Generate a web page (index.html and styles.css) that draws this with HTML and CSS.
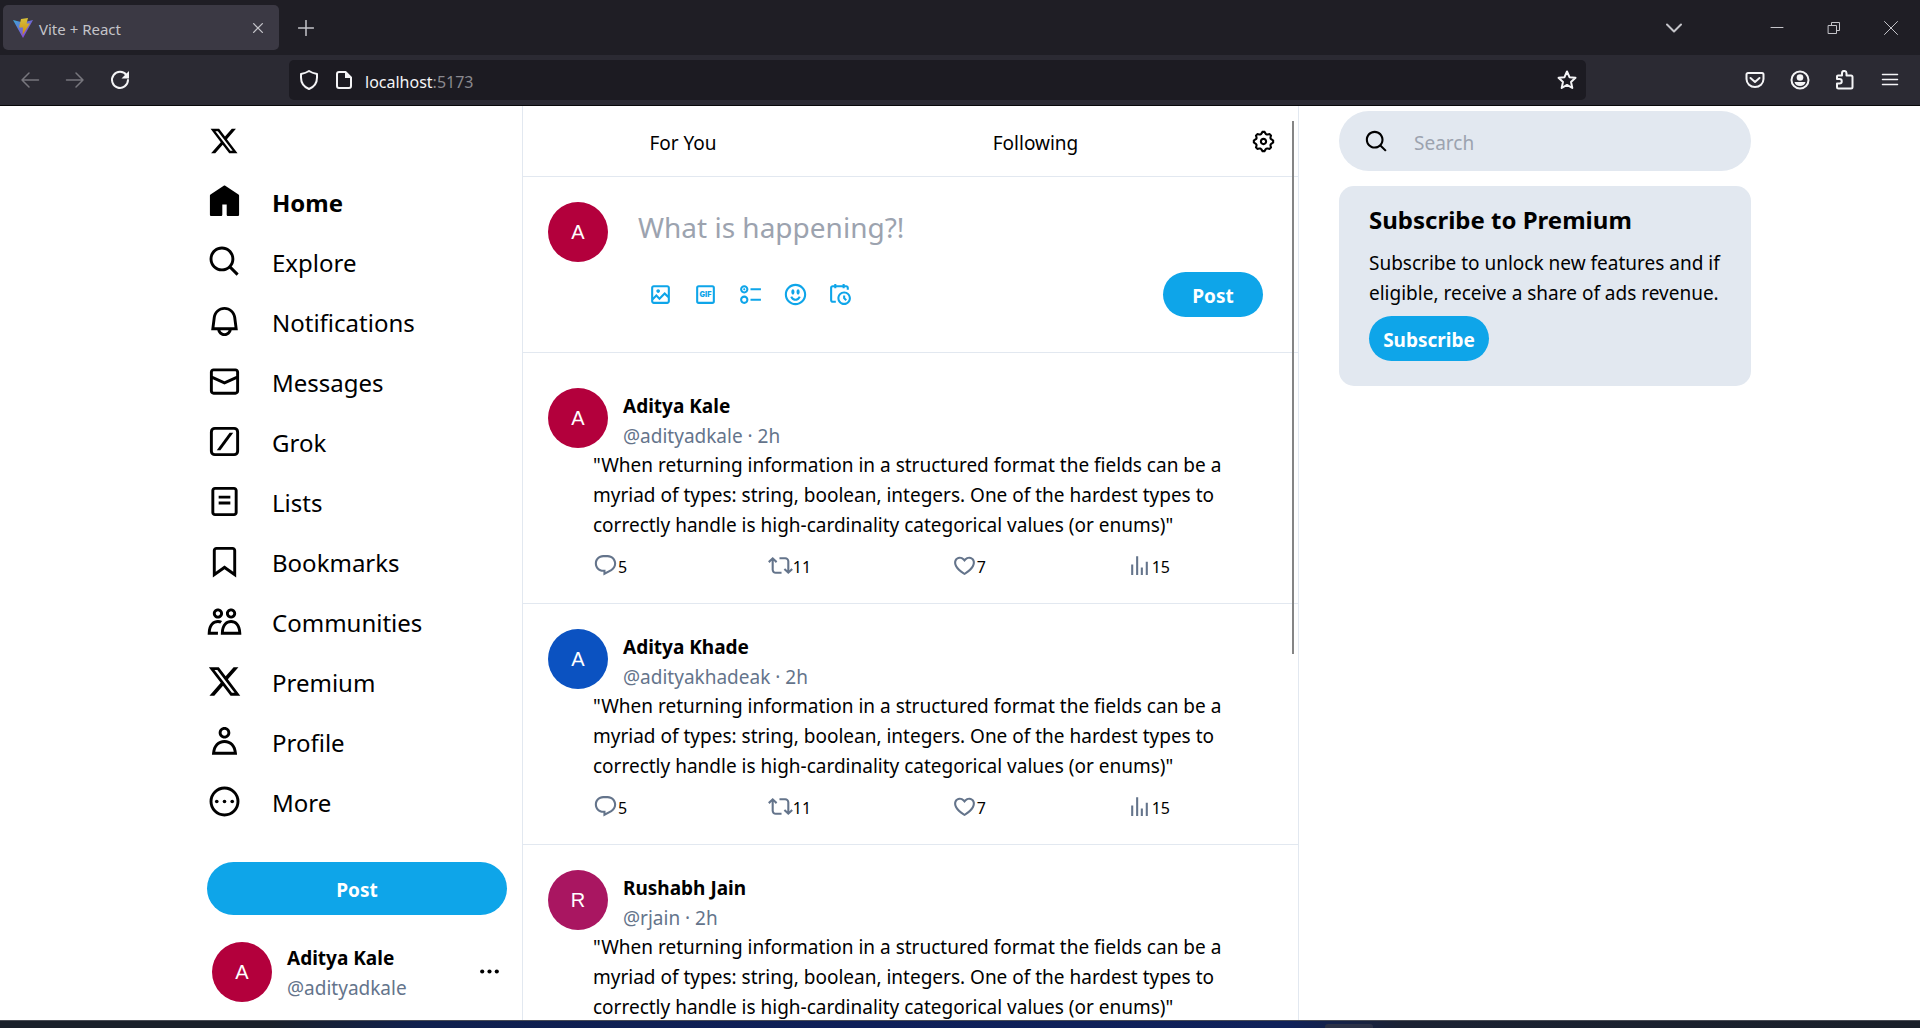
FILE: index.html
```html
<!DOCTYPE html>
<html lang="en">
<head>
<meta charset="utf-8">
<title>Vite + React</title>
<link rel="stylesheet" href="styles.css">
</head>
<body>
<svg class="sprite" aria-hidden="true">
  <defs>
    <linearGradient id="vite-blue" x1="0" y1="0" x2="1" y2="1"><stop offset="0" stop-color="#3aa9d8"/><stop offset="1" stop-color="#a32bd0"/></linearGradient>
    <linearGradient id="vite-gold" x1="0" y1="0" x2="0" y2="1"><stop offset="0" stop-color="#d8c23a"/><stop offset="1" stop-color="#c98a14"/></linearGradient>
  </defs>
  <symbol id="i-x" viewBox="0 0 24 24"><path d="M18.244 2.25h3.308l-7.227 8.26 8.502 11.24H16.17l-5.214-6.817L4.99 21.75H1.68l7.73-8.835L1.254 2.25H8.08l4.713 6.231zm-1.161 17.52h1.833L7.084 4.126H5.117z"/></symbol>
  <symbol id="i-home" viewBox="0 0 24 24"><path d="M21.591 7.146L12.52 1.157c-.316-.21-.724-.21-1.04 0l-9.071 5.99c-.26.173-.409.456-.409.757v13.183c0 .502.418.913.929.913h6.638c.511 0 .929-.41.929-.913v-7.075h3.008v7.075c0 .502.418.913.929.913h6.639c.51 0 .928-.41.928-.913V7.904c0-.301-.158-.584-.408-.758z"/></symbol>
  <symbol id="i-search" viewBox="0 0 24 24"><path d="M10.25 3.75c-3.59 0-6.5 2.91-6.5 6.5s2.91 6.5 6.5 6.5c1.795 0 3.419-.726 4.596-1.904 1.178-1.177 1.904-2.801 1.904-4.596 0-3.59-2.91-6.5-6.5-6.5zm-8.5 6.5c0-4.694 3.806-8.5 8.5-8.5s8.5 3.806 8.5 8.5c0 1.986-.682 3.815-1.824 5.262l4.781 4.781-1.414 1.414-4.781-4.781c-1.447 1.142-3.276 1.824-5.262 1.824-4.694 0-8.5-3.806-8.5-8.5z"/></symbol>
  <symbol id="i-bell" viewBox="0 0 24 24"><path d="M19.993 9.042C19.48 5.017 16.054 2 11.996 2s-7.49 3.021-7.999 7.051L2.866 18H7.1c.463 2.282 2.481 4 4.9 4s4.437-1.718 4.9-4h4.236l-1.143-8.958zM12 20c-1.306 0-2.417-.835-2.829-2h5.658c-.412 1.165-1.523 2-2.829 2zm-6.866-4l.847-6.698C6.364 6.272 8.941 4 11.996 4s5.627 2.268 6.013 5.295L18.864 16H5.134z"/></symbol>
  <symbol id="i-mail" viewBox="0 0 24 24"><path d="M1.998 5.5c0-1.381 1.119-2.5 2.5-2.5h15c1.381 0 2.5 1.119 2.5 2.5v13c0 1.381-1.119 2.5-2.5 2.5h-15c-1.381 0-2.5-1.119-2.5-2.5v-13zm2.5-.5c-.276 0-.5.224-.5.5v2.764l8 3.638 8-3.636V5.5c0-.276-.224-.5-.5-.5h-15zm15.5 5.463l-8 3.636-8-3.638V18.5c0 .276.224.5.5.5h15c.276 0 .5-.224.5-.5v-8.037z"/></symbol>
  <symbol id="i-grok" viewBox="0 0 24 24"><rect x="3" y="3" width="18" height="18" rx="2.4" fill="none" stroke="currentColor" stroke-width="2"/><path d="M15.5 6h2.5L9.200 18H6.700z"/></symbol>
  <symbol id="i-list" viewBox="0 0 24 24"><path d="M3 4.5C3 3.12 4.12 2 5.5 2h13C19.88 2 21 3.12 21 4.5v15c0 1.38-1.12 2.5-2.5 2.5h-13C4.12 22 3 20.88 3 19.5v-15zM5.5 4c-.28 0-.5.22-.5.5v15c0 .28.22.5.5.5h13c.28 0 .5-.22.5-.5v-15c0-.28-.22-.5-.5-.5h-13zM16 10H8V8h8v2zm-8 2h8v2H8v-2z"/></symbol>
  <symbol id="i-bookmark" viewBox="0 0 24 24"><path d="M4 4.5C4 3.12 5.119 2 6.5 2h11C18.881 2 20 3.12 20 4.5v18.44l-8-5.71-8 5.71V4.5zM6.5 4c-.276 0-.5.22-.5.5v14.56l6-4.29 6 4.29V4.5c0-.28-.224-.5-.5-.5h-11z"/></symbol>
  <symbol id="i-people" viewBox="0 0 24 24"><path d="M7.501 19.917L7.471 21H.472l.029-1.027c.184-6.618 3.736-8.977 7-8.977.963 0 1.95.212 2.87.672-.444.478-.851 1.03-1.212 1.656-.507-.204-1.054-.329-1.658-.329-2.767 0-4.57 2.223-4.938 6.004H7.56c-.023.302-.05.599-.059.918zm15.998.056L23.528 21H9.472l.029-1.027c.184-6.618 3.736-8.977 7-8.977s6.816 2.358 7 8.977zM21.437 19c-.367-3.781-2.17-6.004-4.938-6.004s-4.57 2.223-4.938 6.004h9.875zm-4.938-9c-.799 0-1.527-.279-2.116-.73-.836-.64-1.384-1.638-1.384-2.77 0-1.93 1.567-3.5 3.5-3.5s3.5 1.57 3.5 3.5c0 1.132-.548 2.13-1.384 2.77-.589.451-1.317.73-2.116.73zm-1.5-3.5c0 .827.673 1.5 1.5 1.5s1.5-.673 1.5-1.5-.673-1.5-1.5-1.5-1.5.673-1.5 1.5zM7.501 3C9.434 3 11 4.57 11 6.5S9.434 10 7.501 10 4 8.43 4 6.5 5.57 3 7.501 3zm0 2C6.673 5 6 5.673 6 6.5S6.673 8 7.501 8 9 7.327 9 6.5 8.328 5 7.501 5z"/></symbol>
  <symbol id="i-person" viewBox="0 0 24 24"><path d="M5.651 19h12.698c-.337-1.8-1.023-3.21-1.945-4.19C15.318 13.65 13.838 13 12 13s-3.317.65-4.404 1.81c-.922.98-1.608 2.39-1.945 4.19zm.486-5.56C7.627 11.85 9.648 11 12 11s4.373.85 5.863 2.44c1.477 1.58 2.366 3.8 2.632 6.46l.11 1.1H3.395l.11-1.1c.266-2.66 1.155-4.88 2.632-6.46zM12 4c-1.105 0-2 .9-2 2s.895 2 2 2 2-.9 2-2-.895-2-2-2zM8 6c0-2.21 1.791-4 4-4s4 1.79 4 4-1.791 4-4 4-4-1.79-4-4z"/></symbol>
  <symbol id="i-more" viewBox="0 0 24 24"><circle cx="12" cy="12" r="9.25" fill="none" stroke="currentColor" stroke-width="2"/><circle cx="6.700" cy="12" r="1.25"/><circle cx="12" cy="12" r="1.25"/><circle cx="17.300" cy="12" r="1.25"/></symbol>
  <symbol id="i-dots" viewBox="0 0 24 24"><circle cx="5" cy="12" r="2"/><circle cx="12" cy="12" r="2"/><circle cx="19" cy="12" r="2"/></symbol>
  <symbol id="i-gear" viewBox="0 0 24 24"><path d="M10.54 1.75h2.92l1.57 2.36c.11.17.32.25.53.21l2.53-.59 2.17 2.17-.58 2.54c-.05.2.04.41.21.53l2.36 1.57v2.92l-2.36 1.57c-.17.12-.26.33-.21.53l.58 2.54-2.17 2.17-2.53-.59c-.21-.04-.42.04-.53.21l-1.57 2.36h-2.92l-1.58-2.36c-.11-.17-.32-.25-.52-.21l-2.54.59-2.17-2.17.58-2.54c.05-.2-.03-.41-.21-.53l-2.35-1.57v-2.92L4.1 8.97c.18-.12.26-.33.21-.53L3.73 5.9 5.9 3.73l2.54.59c.2.04.41-.04.52-.21l1.58-2.36zm1.07 2l-.98 1.47C10.05 6.08 9 6.5 7.99 6.27l-1.46-.34-.6.6.33 1.46c.24 1.01-.18 2.07-1.05 2.64l-1.46.98v.78l1.46.98c.87.57 1.29 1.63 1.05 2.64l-.33 1.46.6.6 1.46-.34c1.01-.23 2.06.19 2.64 1.05l.98 1.47h.78l.97-1.47c.58-.86 1.63-1.28 2.65-1.05l1.45.34.61-.6-.34-1.46c-.23-1.01.18-2.07 1.05-2.64l1.47-.98v-.78l-1.47-.98c-.87-.57-1.28-1.63-1.05-2.64l.34-1.46-.61-.6-1.45.34c-1.02.23-2.07-.19-2.65-1.05l-.97-1.47h-.78zM12 10.5c-.83 0-1.5.67-1.5 1.5s.67 1.5 1.5 1.5c.82 0 1.5-.67 1.5-1.5s-.68-1.5-1.5-1.5zM8.5 12c0-1.93 1.56-3.5 3.5-3.5 1.93 0 3.5 1.57 3.5 3.5s-1.57 3.5-3.5 3.5c-1.94 0-3.5-1.57-3.5-3.5z"/></symbol>
  <symbol id="i-image" viewBox="0 0 24 24"><path d="M3 5.5C3 4.119 4.119 3 5.5 3h13C19.881 3 21 4.119 21 5.5v13c0 1.381-1.119 2.5-2.5 2.5h-13C4.119 21 3 19.881 3 18.5v-13zM5.5 5c-.276 0-.5.224-.5.5v9.086l3-3 3 3 5-5 3 3V5.5c0-.276-.224-.5-.5-.5h-13zM19 15.414l-3-3-5 5-3-3-3 3V18.5c0 .276.224.5.5.5h13c.276 0 .5-.224.5-.5v-3.086zM9.75 7C8.784 7 8 7.784 8 8.75s.784 1.75 1.75 1.75 1.75-.784 1.75-1.75S10.716 7 9.75 7z"/></symbol>
  <symbol id="i-poll" viewBox="0 0 24 24"><path d="M6 5c-1.1 0-2 .895-2 2s.9 2 2 2 2-.895 2-2-.9-2-2-2zM2 7c0-2.209 1.79-4 4-4s4 1.791 4 4-1.79 4-4 4-4-1.791-4-4zm20 1H12V6h10v2zM6 15c-1.1 0-2 .895-2 2s.9 2 2 2 2-.895 2-2-.9-2-2-2zm-4 2c0-2.209 1.79-4 4-4s4 1.791 4 4-1.79 4-4 4-4-1.791-4-4zm20 1H12v-2h10v2zM7 7c0 .552-.45 1-1 1s-1-.448-1-1 .45-1 1-1 1 .448 1 1z"/></symbol>
  <symbol id="i-smile" viewBox="0 0 24 24"><path d="M8 9.5C8 8.119 8.672 7 9.5 7S11 8.119 11 9.5 10.328 12 9.5 12 8 10.881 8 9.5zm6.5 2.5c.828 0 1.5-1.119 1.5-2.5S15.328 7 14.5 7 13 8.119 13 9.5s.672 2.5 1.5 2.5zM12 16c-2.224 0-3.021-2.227-3.051-2.316l-1.897.633c.05.15 1.271 3.684 4.949 3.684s4.898-3.533 4.949-3.684l-1.896-.638c-.033.095-.83 2.322-3.053 2.322zm10.25-4.001c0 5.652-4.598 10.25-10.25 10.25S1.75 17.652 1.75 12 6.348 1.75 12 1.75 22.25 6.348 22.25 12zm-2 0c0-4.549-3.701-8.25-8.25-8.25S3.75 7.451 3.75 12s3.701 8.25 8.25 8.25 8.25-3.701 8.25-8.25z"/></symbol>
  <symbol id="i-schedule" viewBox="0 0 24 24"><path d="M6 3V2h2v1h6V2h2v1h1.5C18.88 3 20 4.119 20 5.5v2h-2v-2c0-.276-.22-.5-.5-.5H16v1h-2V5H8v1H6V5H4.5c-.28 0-.5.224-.5.5v12c0 .276.22.5.5.5h3v2h-3C3.12 20 2 18.881 2 17.5v-12C2 4.119 3.12 3 4.500 3H6zm9.5 8c-2.49 0-4.5 2.015-4.5 4.5s2.01 4.5 4.5 4.5 4.5-2.015 4.5-4.5-2.01-4.5-4.5-4.5zM9 15.5C9 11.91 11.91 9 15.5 9s6.5 2.91 6.5 6.5-2.91 6.5-6.5 6.5S9 19.09 9 15.5zm5.5-2.5h2v2.086l1.71 1.707-1.42 1.414-2.29-2.293V13z"/></symbol>
  <symbol id="i-reply" viewBox="0 0 24 24"><path d="M1.751 10c0-4.42 3.584-8 8.005-8h4.366c4.49 0 8.129 3.64 8.129 8.13 0 2.96-1.607 5.68-4.196 7.11l-8.054 4.46v-3.69h-.067c-4.49.1-8.183-3.51-8.183-8.01zm8.005-6c-3.317 0-6.005 2.69-6.005 6 0 3.37 2.77 6.08 6.138 6.01l.351-.01h1.761v2.3l5.087-2.81c1.951-1.08 3.163-3.13 3.163-5.36 0-3.39-2.744-6.13-6.129-6.13H9.756z"/></symbol>
  <symbol id="i-repost" viewBox="0 0 24 24"><path d="M4.5 3.88l4.432 4.14-1.364 1.46L5.5 7.55V16c0 1.1.896 2 2 2H13v2H7.5c-2.209 0-4-1.79-4-4V7.55L1.432 9.48.068 8.02 4.5 3.88zM16.5 6H11V4h5.5c2.209 0 4 1.79 4 4v8.45l2.068-1.93 1.364 1.46-4.432 4.14-4.432-4.14 1.364-1.46 2.068 1.93V8c0-1.1-.896-2-2-2z"/></symbol>
  <symbol id="i-heart" viewBox="0 0 24 24"><path d="M16.697 5.5c-1.222-.06-2.679.51-3.89 2.16l-.805 1.09-.806-1.09C9.984 6.01 8.526 5.44 7.304 5.5c-1.243.07-2.349.78-2.91 1.91-.552 1.12-.633 2.78.479 4.82 1.074 1.97 3.257 4.27 7.129 6.61 3.87-2.34 6.052-4.64 7.126-6.61 1.111-2.04 1.03-3.7.477-4.82-.561-1.13-1.666-1.84-2.908-1.91zm4.187 7.69c-1.351 2.48-4.001 5.12-8.379 7.67l-.503.3-.504-.3c-4.379-2.55-7.029-5.19-8.382-7.67-1.36-2.5-1.41-4.86-.514-6.67.887-1.79 2.647-2.91 4.601-3.01 1.651-.09 3.368.56 4.798 2.01 1.429-1.45 3.146-2.1 4.796-2.01 1.954.1 3.714 1.22 4.601 3.01.896 1.81.846 4.17-.514 6.67z"/></symbol>
  <symbol id="i-views" viewBox="0 0 24 24"><path d="M8.75 21V3h2v18h-2zM18 21V8.5h2V21h-2zM4 21l.004-10h2L6 21H4zm9.248 0v-7h2v7h-2z"/></symbol>
</svg>

<header class="browser">
  <div class="tabstrip">
    <div class="tab">
      <svg class="favicon" viewBox="0 0 20 20"><path d="M0 2l10 2.500L20 2 10 20z" fill="url(#vite-blue)"/><path d="M8 1l7-1-1.500 5.500H17L9.500 17l.5-7.500H6z" fill="url(#vite-gold)"/></svg>
      <span class="tab-title">Vite + React</span>
      <button class="chrome-btn tab-close" aria-label="Close tab"><svg viewBox="0 0 16 16"><path d="M3 3l10 10M13 3L3 13"/></svg></button>
    </div>
    <button class="chrome-btn new-tab" aria-label="New tab"><svg viewBox="0 0 16 16"><path d="M8 .5v15M.5 8h15"/></svg></button>
    <div class="window-controls">
      <button class="chrome-btn tab-list" aria-label="List all tabs"><svg viewBox="0 0 16 16"><path d="M1 4.500l7 7 7-7" stroke-width="2"/></svg></button>
      <button class="chrome-btn" aria-label="Minimize"><svg viewBox="0 0 14 14"><path d="M1 6.500h12" stroke-width="1"/></svg></button>
      <button class="chrome-btn" aria-label="Restore"><svg viewBox="0 0 14 14"><path d="M1.500 4.500h8v8h-8zM4.500 4V1.500h8v8H10" stroke-width="1"/></svg></button>
      <button class="chrome-btn" aria-label="Close"><svg viewBox="0 0 14 14"><path d="M.5.5l13 13M13.500.5l-13 13" stroke-width="1"/></svg></button>
    </div>
  </div>
  <div class="toolbar">
    <div class="nav-buttons">
      <button class="chrome-btn dim" aria-label="Back"><svg viewBox="0 0 20 20"><path d="M18.500 10H2M9 3l-7 7 7 7"/></svg></button>
      <button class="chrome-btn dim" aria-label="Forward"><svg viewBox="0 0 20 20"><path d="M1.500 10H18M11 3l7 7-7 7"/></svg></button>
      <button class="chrome-btn bright" aria-label="Reload"><svg viewBox="0 0 20 20"><path d="M16.500 5.200A8 8 0 1 0 18 10" stroke-width="2"/><path d="M19 1v7.500h-7.500z" fill="currentColor" stroke="none"/></svg></button>
    </div>
    <div class="urlbar">
      <div class="site-info">
        <svg class="chrome-icon" viewBox="0 0 20 20"><path d="M10 1c3 2 5.500 2.500 8 3v3.500c0 5-3 9.500-8 11.500-5-2-8-6.500-8-11.500V4c2.500-.5 5-1 8-3z"/></svg>
        <svg class="chrome-icon" viewBox="0 0 20 20"><path d="M11.500 2H5a2 2 0 0 0-2 2v12a2 2 0 0 0 2 2h10a2 2 0 0 0 2-2V7.500z"/><path d="M11 1.500V8h6.500z" fill="currentColor" stroke="none"/></svg>
      </div>
      <span class="url">localhost<span class="port">:5173</span></span>
      <svg class="chrome-icon star" viewBox="0 0 20 20"><path d="M10 1.500l2.500 5.700 6 .6-4.500 4.100 1.300 6.100L10 14.900 4.700 18 6 11.900 1.500 7.800l6-.6z"/></svg>
    </div>
    <div class="tools">
      <button class="chrome-btn bright" aria-label="Save to Pocket"><svg viewBox="0 0 20 20"><path d="M3 3h14a1.500 1.500 0 0 1 1.500 1.500V9a8.500 8 0 0 1-17 0V4.500A1.500 1.500 0 0 1 3 3zM5.500 8l4.500 4 4.500-4" stroke-width="2"/></svg></button>
      <button class="chrome-btn bright" aria-label="Account"><svg viewBox="0 0 20 20"><circle cx="10" cy="10" r="8.500" stroke-width="2"/><circle cx="10" cy="7.500" r="3.300" fill="currentColor" stroke="none"/><path d="M4.500 12h11c-.5 2.500-2.700 4-5.500 4s-5-1.500-5.500-4z" fill="currentColor" stroke="none"/></svg></button>
      <button class="chrome-btn bright" aria-label="Extensions"><svg viewBox="0 0 20 20"><path d="M3 5.500h4V3.200a2 2 0 0 1 4.500 0v2.300H16a1.500 1.500 0 0 1 1.500 1.500v10a1.500 1.500 0 0 1-1.500 1.500H3.500A1.500 1.500 0 0 1 2 17v-3.500h2.500a2 2 0 0 0 0-4.500H2V6.500a1 1 0 0 1 1-1z" stroke-width="2"/></svg></button>
      <button class="chrome-btn bright" aria-label="Menu"><svg viewBox="0 0 20 20"><path d="M2.500 4.500h15M2.500 9.500h15M2.500 14.500h15"/></svg></button>
    </div>
  </div>
</header>

<main class="app">
  <div class="side-col">
    <div class="sidebar">
      <nav class="menu" aria-label="Primary">
        <a href="#" class="brand" aria-label="X"><svg><use href="#i-x"/></svg></a>
        <a href="#" class="active"><svg><use href="#i-home"/></svg><span>Home</span></a>
        <a href="#"><svg><use href="#i-search"/></svg><span>Explore</span></a>
        <a href="#"><svg><use href="#i-bell"/></svg><span>Notifications</span></a>
        <a href="#"><svg><use href="#i-mail"/></svg><span>Messages</span></a>
        <a href="#"><svg><use href="#i-grok"/></svg><span>Grok</span></a>
        <a href="#"><svg><use href="#i-list"/></svg><span>Lists</span></a>
        <a href="#"><svg><use href="#i-bookmark"/></svg><span>Bookmarks</span></a>
        <a href="#"><svg><use href="#i-people"/></svg><span>Communities</span></a>
        <a href="#"><svg><use href="#i-x"/></svg><span>Premium</span></a>
        <a href="#"><svg><use href="#i-person"/></svg><span>Profile</span></a>
        <a href="#"><svg><use href="#i-more"/></svg><span>More</span></a>
      </nav>
      <button class="btn post-wide">Post</button>
      <div class="account">
        <span class="avatar crimson">A</span>
        <div class="who"><strong>Aditya Kale</strong><span class="handle">@adityadkale</span></div>
        <button class="icon-btn" aria-label="Account menu"><svg><use href="#i-dots"/></svg></button>
      </div>
    </div>
  </div>

  <section class="feed">
    <div class="feed-tabs">
      <a href="#">For You</a>
      <a href="#">Following</a>
      <button class="icon-btn" aria-label="Timeline settings"><svg><use href="#i-gear"/></svg></button>
    </div>
    <form class="composer">
      <span class="avatar crimson">A</span>
      <div class="composer-body">
        <input type="text" placeholder="What is happening?!" aria-label="Post text">
        <div class="composer-tools">
          <button type="button" class="icon-btn" aria-label="Media"><svg><use href="#i-image"/></svg></button>
          <button type="button" class="icon-btn" aria-label="GIF"><svg viewBox="0 0 24 24"><rect x="4" y="4" width="16" height="16" rx="1.5" fill="none" stroke="currentColor" stroke-width="2"/><text x="12" y="14.500" text-anchor="middle" class="gif-label">GIF</text></svg></button>
          <button type="button" class="icon-btn" aria-label="Poll"><svg><use href="#i-poll"/></svg></button>
          <button type="button" class="icon-btn" aria-label="Emoji"><svg><use href="#i-smile"/></svg></button>
          <button type="button" class="icon-btn" aria-label="Schedule"><svg><use href="#i-schedule"/></svg></button>
          <button type="button" class="btn post-small">Post</button>
        </div>
      </div>
    </form>
    <div class="tweets">
      <article class="tweet">
        <div class="tweet-head"><span class="avatar crimson">A</span><div class="who"><strong>Aditya Kale</strong><span class="handle">@adityadkale · 2h</span></div></div>
        <p>"When returning information in a structured format the fields can be a myriad of types: string, boolean, integers. One of the hardest types to correctly handle is high-cardinality categorical values (or enums)"</p>
        <div class="actions">
          <button aria-label="Reply"><svg><use href="#i-reply"/></svg><span>5</span></button>
          <button aria-label="Repost"><svg><use href="#i-repost"/></svg><span>11</span></button>
          <button aria-label="Like"><svg><use href="#i-heart"/></svg><span>7</span></button>
          <button aria-label="Views"><svg><use href="#i-views"/></svg><span>15</span></button>
        </div>
      </article>
      <article class="tweet">
        <div class="tweet-head"><span class="avatar blue">A</span><div class="who"><strong>Aditya Khade</strong><span class="handle">@adityakhadeak · 2h</span></div></div>
        <p>"When returning information in a structured format the fields can be a myriad of types: string, boolean, integers. One of the hardest types to correctly handle is high-cardinality categorical values (or enums)"</p>
        <div class="actions">
          <button aria-label="Reply"><svg><use href="#i-reply"/></svg><span>5</span></button>
          <button aria-label="Repost"><svg><use href="#i-repost"/></svg><span>11</span></button>
          <button aria-label="Like"><svg><use href="#i-heart"/></svg><span>7</span></button>
          <button aria-label="Views"><svg><use href="#i-views"/></svg><span>15</span></button>
        </div>
      </article>
      <article class="tweet">
        <div class="tweet-head"><span class="avatar plum">R</span><div class="who"><strong>Rushabh Jain</strong><span class="handle">@rjain · 2h</span></div></div>
        <p>"When returning information in a structured format the fields can be a myriad of types: string, boolean, integers. One of the hardest types to correctly handle is high-cardinality categorical values (or enums)"</p>
      </article>
    </div>
    <div class="scroll-thumb"></div>
  </section>

  <aside class="extras">
    <label class="search"><svg><use href="#i-search"/></svg><input type="search" placeholder="Search" aria-label="Search"></label>
    <section class="premium">
      <h2>Subscribe to Premium</h2>
      <p>Subscribe to unlock new features and if eligible, receive a share of ads revenue.</p>
      <button class="btn subscribe">Subscribe</button>
    </section>
  </aside>
</main>
<div class="taskbar"><span class="taskbar-item"></span></div>
</body>
</html>
```
FILE: styles.css
```css
* { box-sizing: border-box; }

body {
  margin: 0;
  height: 100vh;
  display: flex;
  flex-direction: column;
  overflow: hidden;
  background: #fff;
  color: #000;
  font-family: "Noto Sans", "Open Sans", sans-serif;
  font-size: 19px;
  line-height: 30px;
}

button, input {
  font: inherit;
  color: inherit;
  border: 0;
  padding: 0;
  background: none;
}

input { outline: 0; min-width: 0; }
a { color: inherit; text-decoration: none; }
p, h2 { margin: 0; }
svg { display: block; fill: currentColor; flex: none; }
.sprite { position: absolute; width: 0; height: 0; }

/* Browser frame */
.browser { flex: none; color: #c4c4c9; border-bottom: 1px solid #08080a; }
.browser svg { fill: none; stroke: currentColor; stroke-width: 1.5; stroke-linecap: round; stroke-linejoin: round; }
.tabstrip { display: flex; align-items: center; height: 55px; padding: 0 22px 0 3px; background: #1f1e25; }
.tab {
  display: flex;
  align-items: center;
  width: 276px;
  height: 45px;
  padding: 0 14px 0 10px;
  gap: 6px;
  border-radius: 5px;
  background: #3b3944;
}
.browser .favicon { width: 20px; height: 20px; stroke: none; }
.tab-title { font-size: 15px; line-height: 20px; flex: 1; padding-top: 2px; }
.tab-close svg { width: 14px; height: 14px; }
.new-tab { margin-left: 19px; }
.new-tab svg { width: 16px; height: 16px; }
.window-controls { display: flex; align-items: center; gap: 43px; margin-left: auto; }
.window-controls svg { width: 14px; height: 14px; }
.tab-list { margin-right: 45px; }
.window-controls .tab-list svg { width: 16px; height: 16px; }

.toolbar { display: flex; align-items: center; height: 50px; padding: 0 20px; background: #2b2a33; }
.nav-buttons { display: flex; gap: 25px; width: 269px; }
.nav-buttons svg { width: 20px; height: 20px; }
.dim { color: #77767d; }
.bright { color: #f4f4f6; }
.urlbar {
  display: flex;
  align-items: center;
  flex: 1;
  height: 40px;
  padding: 0 9px 0 10px;
  gap: 11px;
  border-radius: 5px;
  background: #1c1b22;
  color: #f4f4f6;
}
.site-info { display: flex; gap: 15px; }
.urlbar .chrome-icon { width: 20px; height: 20px; stroke-width: 2; }
.url { flex: 1; font-size: 16px; line-height: 24px; padding-top: 3px; }
.port { color: #8a898f; }
.tools { display: flex; gap: 25px; margin-left: 159px; }
.tools svg { width: 20px; height: 20px; }

/* Page columns */
.app { display: grid; grid-template-columns: 522fr 777fr 621fr; flex: 1; min-height: 0; overflow: hidden; }

.side-col { display: flex; justify-content: flex-end; }
.sidebar { width: 315px; padding-right: 15px; }
.menu { display: flex; flex-direction: column; padding-top: 5px; }
.menu a { display: flex; align-items: center; gap: 30px; height: 60px; font-size: 24px; }
.menu span { padding-top: 4px; }
.menu svg { width: 35px; height: 35px; }
.menu .brand svg { width: 30px; height: 30px; margin-left: 2px; }
.menu .active { font-weight: 700; }

.btn { background: #0ea5e9; color: #fff; font-weight: 700; text-align: center; padding-top: 3px; }
.post-wide { display: block; width: 100%; height: 53px; margin-top: 31px; border-radius: 27px; }
.account { display: flex; align-items: center; gap: 15px; padding: 25px 5px 0; }
.who { display: flex; flex-direction: column; padding-top: 3px; }
.handle { color: #64748b; }
.account .icon-btn { margin-left: auto; }
.icon-btn svg { width: 25px; height: 25px; }

.avatar {
  display: flex;
  align-items: center;
  justify-content: center;
  flex: none;
  width: 60px;
  height: 60px;
  border-radius: 50%;
  color: #fff;
  font-family: "Liberation Sans", Arial, sans-serif;
  font-size: 20px;
}
.crimson { background: #b3003c; }
.blue { background: #0b52c1; }
.plum { background: #a91661; }

/* Feed */
.feed { position: relative; border: solid #e2e8f0; border-width: 0 1px; min-height: 0; overflow: hidden; }
.feed-tabs {
  display: grid;
  grid-template-columns: 320fr 385fr 70fr;
  align-items: center;
  text-align: center;
  height: 71px;
  border-bottom: 1px solid #e2e8f0;
}
.feed-tabs a { padding-top: 4px; }
.feed-tabs .icon-btn { justify-self: center; }
.composer { display: flex; gap: 30px; height: 176px; padding: 25px 35px 0 25px; border-bottom: 1px solid #e2e8f0; }
.composer-body { flex: 1; min-width: 0; }
.composer input { display: block; width: 100%; height: 50px; font-size: 28px; }
.composer input::placeholder, .search input::placeholder { color: #9ca3af; opacity: 1; }
.composer-tools { display: flex; align-items: center; gap: 20px; margin-top: 20px; padding-left: 10px; color: #0ea5e9; }
.gif-label { font: 900 7px "Inter", sans-serif; }
.post-small { width: 100px; height: 45px; margin-left: auto; border-radius: 23px; }

.tweets { padding-top: 10px; }
.tweet { padding: 25px; border-bottom: 1px solid #e2e8f0; }
.tweet-head { display: flex; align-items: flex-start; gap: 15px; height: 62px; }
.tweet p { padding: 0 50px 0 45px; }
.actions { display: flex; justify-content: space-between; padding: 10px 103px 0 45px; height: 38px; }
.actions button { display: flex; align-items: center; height: 30px; font-size: 16px; }
.actions svg { width: 25px; height: 25px; color: #64748b; }
.actions span { padding-top: 3px; }
.scroll-thumb { position: absolute; top: 15px; right: 4px; width: 2px; height: 533px; background: #858585; }

/* Right column */
.extras { padding: 5px 0 0 40px; }
.search { display: flex; align-items: center; gap: 25px; max-width: 412px; height: 60px; padding: 0 25px; border-radius: 30px; background: #e2e8f0; }
.search svg { width: 25px; height: 25px; }
.search input { flex: 1; padding-top: 4px; }
.premium { max-width: 412px; margin-top: 15px; padding: 15px 30px 25px; border-radius: 15px; background: #e2e8f0; }
.premium h2 { font-size: 24px; line-height: 38px; margin-bottom: 9px; }
.subscribe { width: 120px; height: 45px; margin-top: 8px; border-radius: 23px; }

/* Desktop taskbar */
.taskbar {
  flex: none;
  display: flex;
  align-items: flex-end;
  height: 8px;
  padding-left: 69%;
  border-top: 1px solid #4a4d55;
  background: linear-gradient(90deg, #1a202a 0, #1a202a 14%, #10204e 22%, #0e1f58 45%, #10225a 67%, #1b2233 73%, #1a202a 100%);
}
.taskbar-item { width: 48px; height: 4px; border-radius: 3px 3px 0 0; background: #2b3146; }
```
